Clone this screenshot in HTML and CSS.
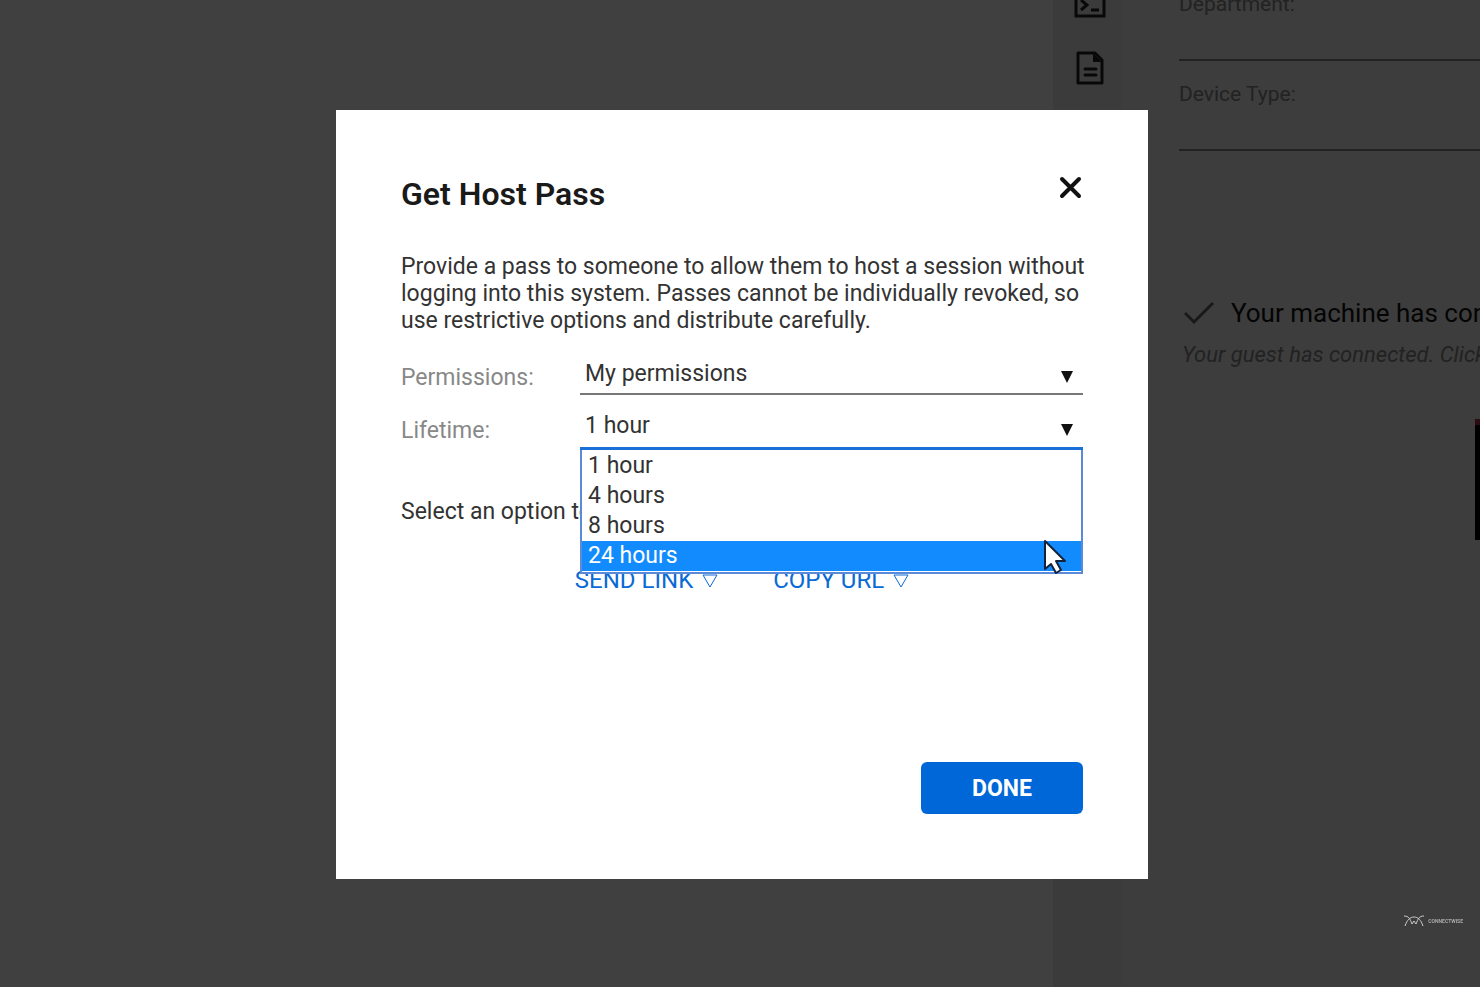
FILE: index.html
```html
<!DOCTYPE html>
<html lang="en">
<head>
    <meta charset="UTF-8">
    <meta name="viewport" content="width=device-width, initial-scale=1.0">
    <title>Get Host Pass</title>
    <link rel="stylesheet" href="styles.css">
</head>
<body>
    <div class="workspace">
        <main class="sessions"></main>
        <nav class="toolbar">
            <button type="button" class="tool" aria-label="Commands">
                <svg width="32" height="26" viewBox="0 0 32 26" fill="none" stroke="#222" stroke-width="3">
                    <rect x="2" y="2" width="28" height="22"/>
                    <path d="M7 8l6 5-6 5"/>
                    <path d="M17 18h8"/>
                </svg>
            </button>
            <button type="button" class="tool" aria-label="Notes">
                <svg width="28" height="34" viewBox="0 0 28 34" fill="none" stroke="#222" stroke-width="3">
                    <path d="M2 2h17l7 7v23H2z" stroke-linejoin="round"/>
                    <path d="M17 2l9 9h-9z" fill="#222" stroke="none"/>
                    <path d="M9 18h11M9 24h11" stroke-linecap="round"/>
                </svg>
            </button>
        </nav>
        <aside class="details">
            <div class="detail-field">
                <label for="department">Department:</label>
                <input type="text" id="department">
            </div>
            <div class="detail-field">
                <label for="deviceType">Device Type:</label>
                <input type="text" id="deviceType">
            </div>
            <div class="status">
                <svg width="32" height="24" viewBox="0 0 32 24" fill="none" stroke="#666" stroke-width="3">
                    <path d="M2 11l9 9L30 1"/>
                </svg>
                <span>Your machine has connected</span>
            </div>
            <p class="status-note">Your guest has connected. Click</p>
            <div class="screen"></div>
        </aside>
    </div>

    <div class="overlay">
        <section class="dialog" role="dialog" aria-labelledby="dialogTitle">
            <header class="dialog-header">
                <h1 id="dialogTitle">Get Host Pass</h1>
                <button type="button" class="close" aria-label="Close">
                    <svg width="26" height="24" viewBox="0 0 26 24" fill="none" stroke="#111" stroke-width="4" stroke-linecap="round">
                        <path d="M5 4l17 17M22 4L5 21"/>
                    </svg>
                </button>
            </header>
            <p class="intro">Provide a pass to someone to allow them to host a session without logging into this system. Passes cannot be individually revoked, so use restrictive options and distribute carefully.</p>
            <form>
                <div class="form-group">
                    <label for="permissions">Permissions:</label>
                    <div class="picker">
                        <select id="permissions">
                            <option>My permissions</option>
                        </select>
                        <svg class="arrow" width="12" height="12" viewBox="0 0 12 12"><path d="M0 0h12L6 12z" fill="#111"/></svg>
                    </div>
                </div>
                <div class="form-group">
                    <label for="lifetime">Lifetime:</label>
                    <div class="picker open">
                        <select id="lifetime">
                            <option>1 hour</option>
                            <option>4 hours</option>
                            <option>8 hours</option>
                            <option>24 hours</option>
                        </select>
                        <svg class="arrow" width="12" height="12" viewBox="0 0 12 12"><path d="M0 0h12L6 12z" fill="#111"/></svg>
                        <ul class="menu" role="listbox" aria-label="Lifetime">
                            <li role="option">1 hour</li>
                            <li role="option">4 hours</li>
                            <li role="option">8 hours</li>
                            <li role="option" class="active" aria-selected="true">24 hours</li>
                        </ul>
                        <svg class="cursor" width="24" height="36" viewBox="0 0 24 36">
                            <path d="M2 2v28l6-5 5 9 5-3-5-9h9z" fill="#fff" stroke="#14223c" stroke-width="2" stroke-linejoin="round"/>
                        </svg>
                    </div>
                </div>
            </form>
            <p class="hint">Select an option to</p>
            <div class="links">
                <a href="#">SEND LINK <svg width="16" height="14" viewBox="0 0 16 14" fill="none" stroke="#0a6ad6"><path d="M1 1h14L8 13z"/></svg></a>
                <a href="#">COPY URL <svg width="16" height="14" viewBox="0 0 16 14" fill="none" stroke="#0a6ad6"><path d="M1 1h14L8 13z"/></svg></a>
            </div>
            <footer class="dialog-footer">
                <button type="button" class="done">DONE</button>
            </footer>
        </section>
    </div>

    <div class="brand">
        <svg width="20" height="12" viewBox="0 0 20 12" fill="none" stroke="#ccc">
            <path d="M0 1c5 0 6 3 8 8l2-3 2 3c2-5 3-8 8-8M1 11c2-6 5-9 9-9s7 3 9 9"/>
        </svg>
        <span>CONNECTWISE</span>
    </div>
</body>
</html>
```
FILE: styles.css
```css
* {
    box-sizing: border-box;
}
body {
    margin: 0;
    font-family: Roboto, "Liberation Sans", sans-serif;
    font-size: 23px;
    line-height: 27px;
    color: #333;
}
h1, p, ul {
    margin: 0;
    padding: 0;
}
button, input, select {
    font: inherit;
    border: 0;
    padding: 0;
    background: none;
}
svg {
    display: block;
    flex: none;
}

/* page behind the dialog */
.workspace {
    display: flex;
    height: 100vh;
    overflow: hidden;
    background: #fff;
}
.sessions {
    flex: 1;
}
.toolbar {
    width: 68px;
    background: #ececec;
    display: flex;
    flex-direction: column;
    align-items: center;
    gap: 33px;
    margin-top: -8px;
    padding-left: 6px;
}
.details {
    width: 359px;
    padding-left: 58px;
    margin-top: -29px;
    background: #f2f2f2;
    overflow: hidden;
    white-space: nowrap;
}
.detail-field {
    height: 90px;
    padding-top: 20px;
    display: flex;
    flex-direction: column;
    font-size: 21px;
    color: #888;
}
.detail-field input {
    flex: 1;
    min-height: 0;
    border-bottom: 2px solid #888;
}
.status {
    display: flex;
    align-items: center;
    gap: 16px;
    margin-top: 149px;
    padding-left: 4px;
    font-size: 26px;
    color: #111;
}
.status-note {
    margin-top: 14px;
    padding-left: 3px;
    font-size: 22px;
    font-style: italic;
    color: #888;
}
.screen {
    height: 121px;
    margin: 51px 0 0 296px;
    background: #000;
    border-top: 6px solid #b03040;
}

/* dialog */
.overlay {
    position: fixed;
    inset: 0;
    display: flex;
    justify-content: center;
    align-items: flex-start;
    padding: 110px 0 0 4px;
    background: rgba(0, 0, 0, 0.75);
}
.dialog {
    width: 812px;
    padding: 65px;
    background: #fff;
}
.dialog-header {
    display: flex;
    justify-content: space-between;
    align-items: flex-start;
}
.dialog-header h1 {
    font-size: 32px;
    line-height: 38px;
    font-weight: 600;
    color: #1a1a1a;
}
.intro {
    margin: 40px -12px 0 0;
}
form {
    margin-top: 14px;
}
.form-group {
    display: flex;
    align-items: flex-start;
    height: 53px;
}
.form-group label {
    width: 179px;
    padding-top: 16px;
    color: #888;
}
.picker {
    position: relative;
    flex: 1;
}
.picker select {
    display: block;
    width: 100%;
    height: 47px;
    padding: 5px 30px 0 5px;
    appearance: none;
    border-bottom: 2px solid #777;
    color: #333;
}
.picker.open select {
    height: 49px;
    padding-bottom: 2px;
    border-bottom: 3px solid #1a6fd8;
}
.arrow {
    position: absolute;
    right: 10px;
    top: 23px;
}
.menu {
    position: absolute;
    top: 100%;
    left: 0;
    right: 0;
    padding: 1px 0;
    list-style: none;
    background: #fff;
    border: 2px solid #5b8bd8;
    border-top: 0;
}
.menu li {
    padding-left: 6px;
    line-height: 30px;
}
.menu .active {
    background: #128bff;
    color: #fff;
}
.cursor {
    position: absolute;
    right: 16px;
    top: 138px;
}
.hint {
    margin-top: 44px;
}
.links {
    display: flex;
    justify-content: center;
    gap: 55px;
    margin-top: 42px;
    font-size: 24px;
}
.links a {
    display: flex;
    align-items: center;
    gap: 9px;
    color: #0a6ad6;
    text-decoration: none;
}
.dialog-footer {
    display: flex;
    justify-content: flex-end;
    margin-top: 168px;
}
.done {
    width: 162px;
    height: 52px;
    border-radius: 6px;
    background: #0067d8;
    color: #fff;
    font-weight: 700;
}

.brand {
    position: fixed;
    right: 17px;
    bottom: 60px;
    display: flex;
    align-items: center;
    gap: 4px;
    font-size: 5px;
    line-height: 12px;
    font-weight: 700;
    color: #aaa;
}
```
